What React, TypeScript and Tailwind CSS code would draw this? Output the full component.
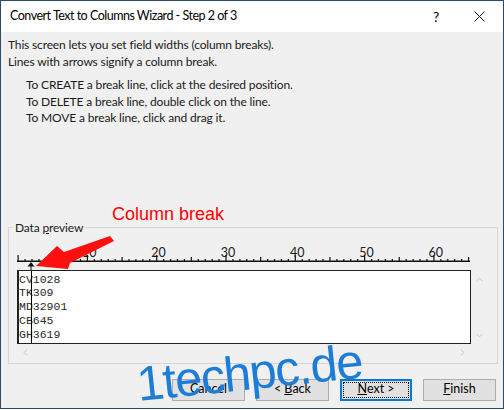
import { ChevronUp, ChevronDown, ChevronLeft, ChevronRight } from "lucide-react";

const ui = "font-['Lato','Noto_Sans',sans-serif]";
const mono = "font-['Liberation_Mono','Courier_New',monospace]";

const previewRows = ["CV1028", "TK309", "MD32901", "CB645", "GH3619"];

const CHAR = 6.93;

function Ruler() {
  const ticks = [];
  for (let i = 0; i <= 65; i++) {
    const x = 1 + i * CHAR;
    const h = i % 10 === 0 ? 6 : i % 5 === 0 ? 4 : 2;
    ticks.push(<rect key={i} x={x - 0.5} y={17 - h} width={1.2} height={h} fill="#111" />);
  }
  const labels = [10, 20, 30, 40, 50, 60].map((n) => (
    <text
      key={n}
      x={1 + n * CHAR + 2}
      y={13}
      textAnchor="middle"
      fontSize="12.5"
      fill="#1a1a1a"
      fontFamily="Lato, sans-serif"
    >
      {n}
    </text>
  ));

  return (
    <svg width={454} height={26} className="block">
      {ticks}
      {labels}
      <rect x={0} y={16.5} width={453} height={1.5} fill="#111" />
      <polygon points="14,18 10.5,22.5 17.5,22.5" fill="#111" />
      <rect x={13.5} y={22} width={1} height={4} fill="#111" />
    </svg>
  );
}

function Button({ children, focused }: { children: React.ReactNode; focused?: boolean }) {
  if (focused) {
    return (
      <div className="w-[72px] h-[22px] bg-[#e1e1e1] border-2 border-[#0078d7] p-[1px]">
        <div className="h-full border border-dotted border-black flex items-center justify-center text-[12.5px] text-black">
          {children}
        </div>
      </div>
    );
  }
  return (
    <div className="w-[73px] h-[22px] bg-[#e1e1e1] border border-[#adadad] flex items-center justify-center text-[12.5px] text-black">
      {children}
    </div>
  );
}

export default function App() {
  return (
    <div className={`relative w-[504px] h-[410px] overflow-hidden bg-white ${ui}`}>
      <div className="w-[504px] h-[409px] border border-[#2e4a69] bg-[#f0f0f0] flex flex-col">
        {/* title bar */}
        <div className="h-[31px] bg-white flex items-center pl-[9px] text-[12.5px] tracking-[-0.5px] text-black">
          <span className="flex-1">Convert Text to Columns Wizard - Step 2 of 3</span>
          <span className="w-[20px] text-center text-[14px] mr-[28px]">?</span>
          <svg width={11} height={11} className="mr-[18px]">
            <path d="M0.5 0.5 L10.5 10.5 M10.5 0.5 L0.5 10.5" stroke="#111" strokeWidth={1} />
          </svg>
        </div>

        {/* instructions */}
        <div className="pl-[7px] pt-[5px] text-[12px] leading-[16.5px] tracking-[-0.15px] text-[#1a1a1a]">
          <p>This screen lets you set field widths (column breaks).</p>
          <p>Lines with arrows signify a column break.</p>
          <div className="pl-[18px] mt-[7px]">
            <p>To CREATE a break line, click at the desired position.</p>
            <p>To DELETE a break line, double click on the line.</p>
            <p>To MOVE a break line, click and drag it.</p>
          </div>
        </div>

        {/* data preview group */}
        <fieldset className="ml-[7px] mr-[5px] mt-[93px] border border-[#d5d5d5] pb-[1px]">
          <legend className="ml-[4px] px-[2px] text-[12px] leading-[16px] tracking-[-0.15px] text-[#1a1a1a]">
            Data <span className="underline">p</span>review
          </legend>
          <div className="pl-[8px] pt-[8px]">
            <Ruler />
            <div className="flex">
              <div className="relative w-[454px] h-[74px] bg-white border border-[#222] border-l-2 pt-[2px]">
                <div className="absolute left-[12px] top-0 bottom-0 w-[1px] bg-black" />
                {previewRows.map((row) => (
                  <div key={row} className={`${mono} text-[11.5px] leading-[13.75px] text-[#2a2a2a]`}>
                    {row}
                  </div>
                ))}
              </div>
              <div className="w-[17px] flex flex-col items-center justify-between pt-[4px] pb-[3px] text-[#c2c2c2]">
                <ChevronUp size={11} strokeWidth={2} />
                <ChevronDown size={11} strokeWidth={2} />
              </div>
            </div>
            <div className="w-[454px] h-[18px] flex items-center justify-between px-[3px] text-[#c2c2c2]">
              <ChevronLeft size={11} strokeWidth={2} />
              <ChevronRight size={11} strokeWidth={2} />
            </div>
          </div>
        </fieldset>

        {/* buttons */}
        <div className="flex justify-end gap-[11px] pr-[7px] mt-[15px]">
          <Button>Cancel</Button>
          <Button>
            &lt; <span className="underline ml-[3px]">B</span>ack
          </Button>
          <Button focused>
            <span className="underline">N</span>ext &gt;
          </Button>
          <Button>
            <span className="underline">F</span>inish
          </Button>
        </div>
      </div>

      {/* annotation overlay */}
      <span className="absolute left-[112px] top-[203px] text-[18px] leading-[22px] text-[#ff0000] font-['Liberation_Sans',Arial,sans-serif]">
        Column break
      </span>
      <svg className="absolute left-0 top-0" width={504} height={410}>
        <polygon
          points="36,266 57,246 64,252 110,236 114,241 70,263 68,269"
          fill="#ff1010"
        />
      </svg>

      {/* watermark */}
      <span className="absolute left-[140px] top-[356px] -rotate-[6deg] origin-bottom-left text-[49px] leading-[56px] tracking-[-1.4px] text-[#1d7cd5] font-['Liberation_Sans',Arial,sans-serif]">
        1techpc.de
      </span>
    </div>
  );
}
